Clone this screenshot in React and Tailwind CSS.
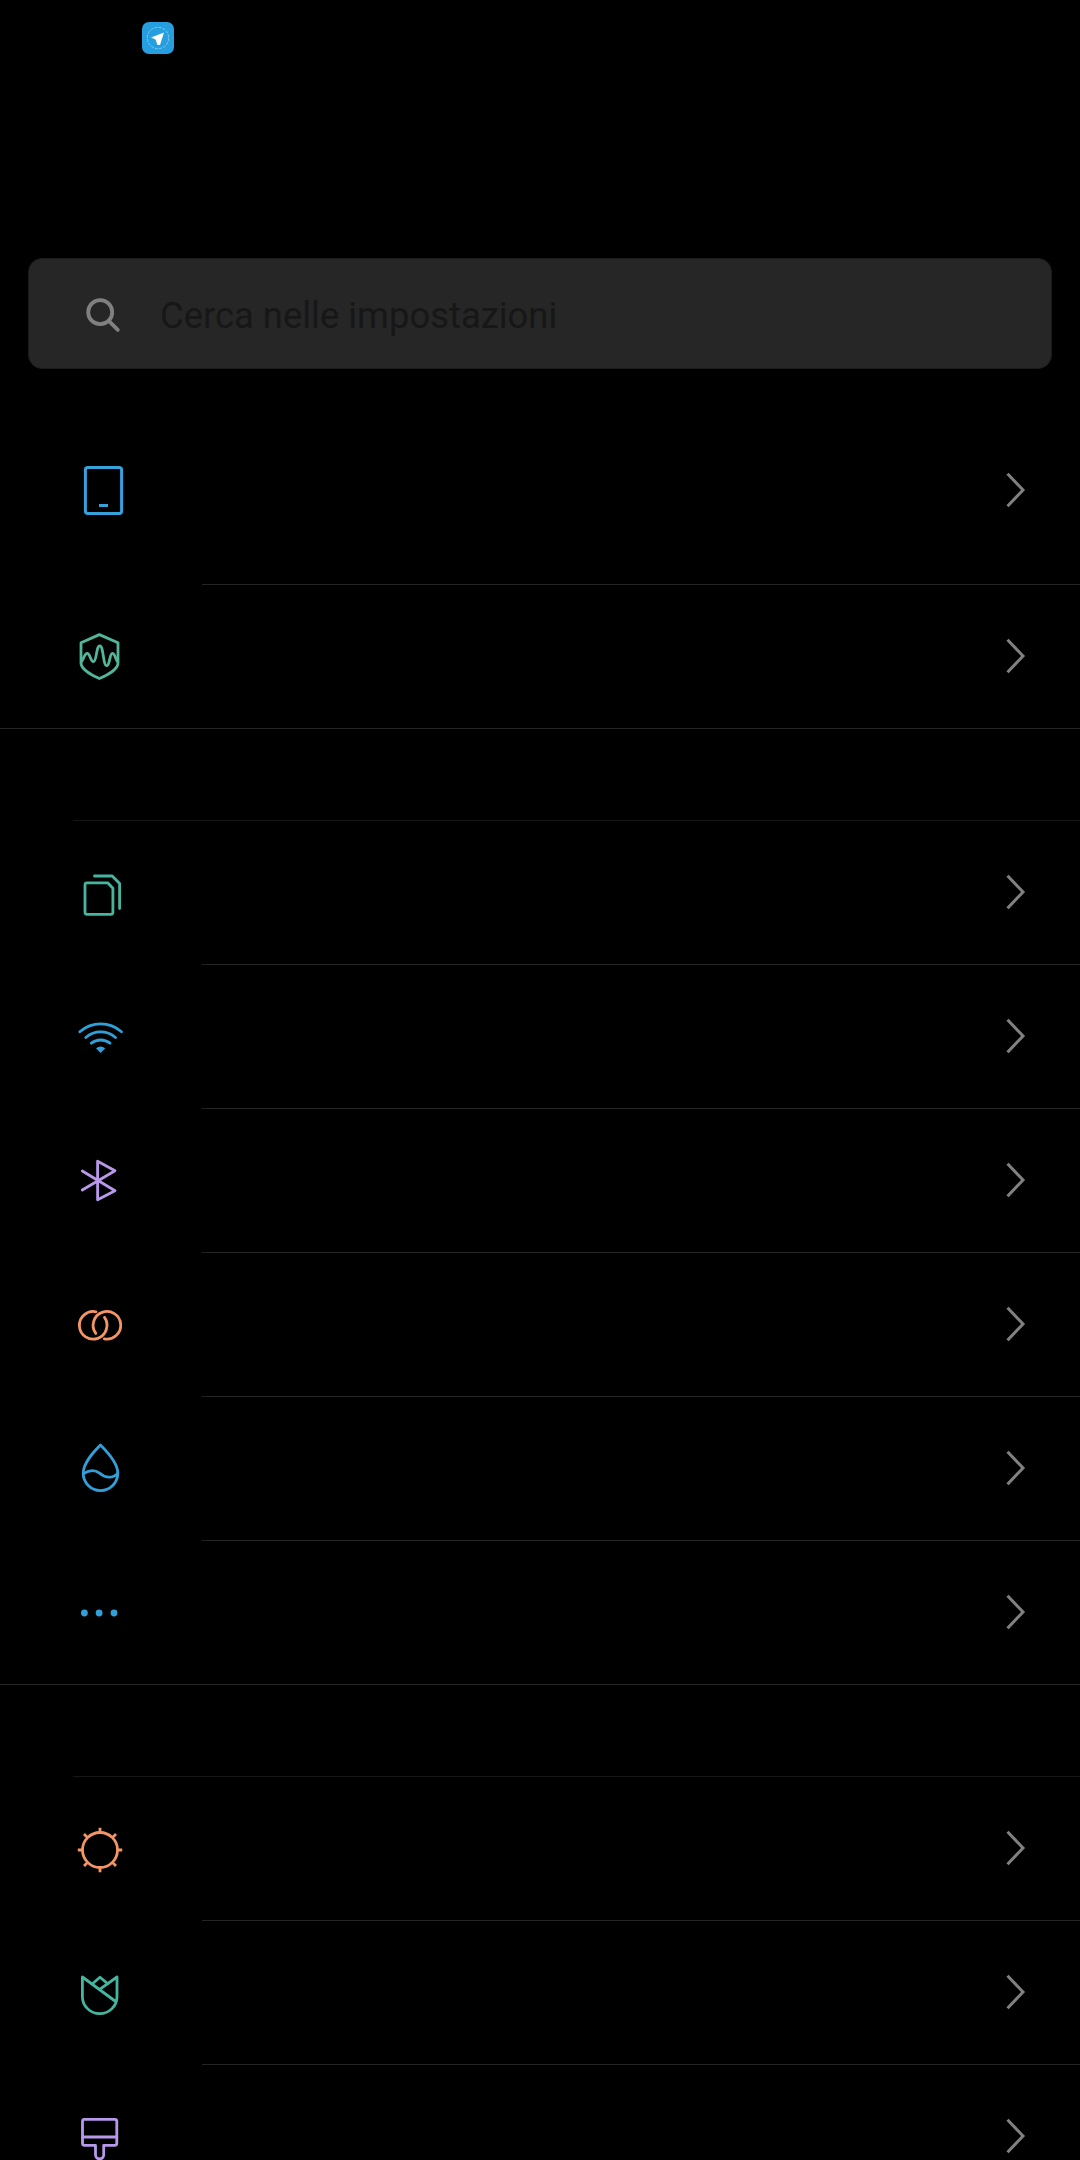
const icons = {
  phone: (
    <>
      <rect x="21.4" y="12.4" width="36.2" height="46.2" rx="2.5" strokeWidth="3" />
      <path d="M35 50.5h9" strokeWidth="3" strokeLinecap="butt" />
    </>
  ),
  shield: (
    <>
      <path d="M35.4 13.6 54 21.8V42c0 5.5-9 11.5-18.6 15.5C26 53.5 17 47.5 17 42V21.8Z" />
      <path d="M17.5 40.5C19.5 38.5 20.5 32.3 23.3 32.3S26.5 40.7 29.3 40.7C33 40.7 32 24.8 35.8 24.8S39 44.7 42.7 44.7C46 44.7 45.5 32.3 48.3 32.3S51.5 38.5 53.5 40.5" />
    </>
  ),
  sim: (
    <>
      <path d="M23 25.8H43.7L48.9 31.3V55.3a2 2 0 0 1-2 2H23a2 2 0 0 1-2-2V27.8a2 2 0 0 1 2-2Z" />
      <path d="M30.5 19H48.2L55.6 26.6V51.5" />
    </>
  ),
  wifi: (
    <>
      <path d="M15.8 30.7A31.5 31.5 0 0 1 57.5 30.7" />
      <path d="M21.8 36.5A22.5 22.5 0 0 1 51.5 36.5" />
      <path d="M27.3 42.2A15.2 15.2 0 0 1 46 42.2" />
      <path d="M32 47.2Q36.6 44 41.2 47.2L36.6 52Z" fill="currentColor" stroke="none" />
    </>
  ),
  bluetooth: <path d="M18.3 26 51 45.7 33.6 54.8V16.2L51 25.7 18.3 45" />,
  link: (
    <>
      <path d="M32 22.8A13.8 13.8 0 1 0 40.5 28.4" />
      <path d="M31.8 44.4A13.8 13.8 0 1 1 40.3 49.8" />
    </>
  ),
  drop: (
    <>
      <path d="M36.4 12C30 18.5 19.2 29.500 19.200 40.300A17.300 17.300 0 0 0 53.800 40.300C53.800 29.500 43 18.500 36.400 12Z" />
      <path d="M19.5 40.6C25 37.1 31 36.600 35.500 40.100C40 44.600 48.500 46.100 53.500 40.600" />
    </>
  ),
  more: (
    <g fill="currentColor" stroke="none">
      <circle cx="20.4" cy="36" r="3.4" />
      <circle cx="35.1" cy="36" r="3.4" />
      <circle cx="50" cy="36" r="3.4" />
    </g>
  ),
  sun: (
    <>
      <circle cx="36" cy="37" r="17.5" />
      <path
        strokeLinecap="butt"
        d="M36 19v-4.2M36 55v4.2M18 37h-4.2M54 37h4.2M23.5 24.5l-3.5-3.5M48.5 24.5l3.5-3.5M23.5 49.5l-3.5 3.5M48.5 49.5l3.5 3.5"
      />
    </>
  ),
  tulip: (
    <>
      <path d="M51 44 18.4 20V39.4A17.3 17.3 0 0 0 53 39.4V20L35.7 32.3" />
      <path d="M28.7 26.5 36 20.2 43.5 26.5" />
    </>
  ),
  brush: (
    <>
      <path d="M31.5 44.3H20.5a2 2 0 0 1-2-2V20.3a2 2 0 0 1 2-2H50.8a2 2 0 0 1 2 2V42.3a2 2 0 0 1-2 2H39.7V53.8a4.1 4.1 0 0 1-8.2 0V44.3" />
      <path d="M18.5 36H52.8" />
    </>
  ),
}

const Chevron = () => (
  <svg className="mr-[54px] h-[71px] w-5 text-[#808080]" viewBox="0 0 20 71" fill="none" stroke="currentColor" strokeWidth="3">
    <path d="M1.5 18.8 17 35 1.5 51.2" />
  </svg>
)

const Row = ({ icon, color, tall, last }) => (
  <div className={`relative flex shrink-0 justify-between pl-16 ${tall ? 'h-[189px] pt-[59px]' : 'h-36 pt-9'}`}>
    <svg
      className={`h-[71px] w-[72px] ${color}`}
      viewBox="0 0 72 71"
      fill="none"
      stroke="currentColor"
      strokeWidth="2.8"
      strokeLinecap="round"
      strokeLinejoin="round"
    >
      {icons[icon]}
    </svg>
    <Chevron />
    <div className={`absolute right-0 bottom-0 h-px bg-[#242424] ${last ? 'left-0' : 'left-[202px]'}`} />
  </div>
)

const groups = [
  [
    { icon: 'phone', color: 'text-[#35a2db]', tall: true },
    { icon: 'shield', color: 'text-[#52b69b]' },
  ],
  [
    { icon: 'sim', color: 'text-[#45b5a0]' },
    { icon: 'wifi', color: 'text-[#32a0d8]' },
    { icon: 'bluetooth', color: 'text-[#b898ea]' },
    { icon: 'link', color: 'text-[#f39564]' },
    { icon: 'drop', color: 'text-[#32a0d8]' },
    { icon: 'more', color: 'text-[#32a0d8]' },
  ],
  [
    { icon: 'sun', color: 'text-[#f39564]' },
    { icon: 'tulip', color: 'text-[#45b5a0]' },
    { icon: 'brush', color: 'text-[#b898ea]' },
  ],
]

export default function App() {
  return (
    <div className="flex h-[2160px] w-[1080px] flex-col overflow-hidden bg-black font-['Roboto',sans-serif]">
      <header className="h-[258px] shrink-0 pt-[22px] pl-[142px]">
        <svg className="h-8 w-8" viewBox="0 0 32 32">
          <rect width="32" height="32" rx="7" fill="#259fe0" />
          <circle cx="16" cy="16" r="10.7" fill="none" stroke="#8bcdf0" strokeWidth="0.9" strokeDasharray="3 1.2" />
          <path d="M22 10.5 9 15.5 13.5 17.5 15.5 23H18Z" fill="#fff" />
        </svg>
      </header>

      <div className="mx-7 mb-[27px] flex h-[111px] shrink-0 items-center rounded-[14px] border border-[#1c1c1c] bg-[#262626] pl-[55px]">
        <svg className="h-10 w-10 text-[#808080]" viewBox="0 0 40 40" fill="none" stroke="currentColor" strokeWidth="3.8">
          <circle cx="16.2" cy="18.2" r="12" />
          <path d="M24.8 26.8 33.8 35.8" strokeLinecap="round" />
        </svg>
        <span className="ml-9 pt-1.5 text-[36.4px] leading-none text-[#171717]">Cerca nelle impostazioni</span>
      </div>

      {groups.map((rows, i) => (
        <section key={i} className="shrink-0">
          {i > 0 && <div className="ml-[73px] h-[92px] border-b border-[#161616]" />}
          {rows.map((row, j) => (
            <Row key={row.icon} {...row} last={j === rows.length - 1} />
          ))}
        </section>
      ))}
    </div>
  )
}
